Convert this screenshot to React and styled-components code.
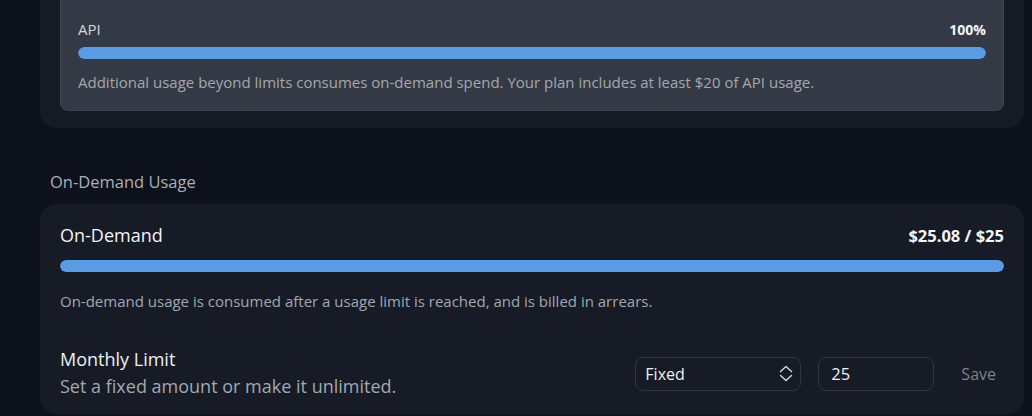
import React, { useState } from 'react';
import styled, { createGlobalStyle } from 'styled-components';

const GlobalStyle = createGlobalStyle`
  html, body {
    margin: 0;
    padding: 0;
    background: #0c111b;
    overflow: hidden;
  }
  body {
    font-family: "Open Sans", "Noto Sans", sans-serif;
    color: #e6e8eb;
  }
`;

const Page = styled.div`
  margin-top: -61px;
  padding: 0 8px 0 40px;
  display: flex;
  flex-direction: column;
`;

const OuterCard = styled.section`
  background: #151a23;
  border-radius: 16px;
  padding: 20px 20px 17px;
`;

const InnerCard = styled.div`
  background: #343a45;
  border: 1px solid #40464f;
  border-radius: 8px;
  padding: 58px 17px 18px;
`;

const MeterHead = styled.div`
  display: flex;
  justify-content: space-between;
  align-items: center;
  height: 22px;
`;

const MeterLabel = styled.span`
  font-size: ${p => (p.$big ? '18px' : '15px')};
  color: ${p => (p.$big ? '#f3f4f6' : '#d5d8dc')};
`;

const MeterValue = styled.span`
  font-size: ${p => (p.$big ? '16.5px' : '14px')};
  font-weight: 700;
  color: #f3f4f6;
`;

const Track = styled.div`
  margin-top: ${p => p.$gap || 7}px;
  height: 12px;
  border-radius: 6px;
  background: #2a303b;
  overflow: hidden;
`;

const Fill = styled.div`
  height: 100%;
  border-radius: 6px;
  background: #5a9be6;
`;

const Note = styled.p`
  margin: ${p => p.$top || 12}px 0 0;
  font-size: 15px;
  line-height: 20px;
  color: #a3a8b0;
`;

const SectionTitle = styled.h3`
  margin: 43px 0 0 10px;
  font-size: 16.5px;
  font-weight: 400;
  line-height: 22px;
  color: #a9afb8;
`;

const UsageCard = styled.section`
  margin-top: 11px;
  background: #161b26;
  border-radius: 16px;
  padding: 20px 20px 13px;
`;

const LimitRow = styled.div`
  margin-top: 36px;
  display: flex;
  align-items: center;
  justify-content: space-between;
`;

const LimitText = styled.div`
  display: flex;
  flex-direction: column;
`;

const LimitTitle = styled.span`
  font-size: 18px;
  line-height: 24px;
  color: #eef0f2;
`;

const LimitSub = styled.span`
  font-size: 18px;
  line-height: 30px;
  color: #a3a8b0;
`;

const Controls = styled.div`
  display: flex;
  align-items: center;
  gap: 17px;
  margin-top: -1px;
`;

const SelectBox = styled.div`
  width: 166px;
  height: 34px;
  box-sizing: border-box;
  border: 1px solid #2f3542;
  border-radius: 8px;
  display: flex;
  align-items: center;
  padding: 0 7px 0 9px;
  font-size: 16px;
  color: #eef0f2;
  justify-content: space-between;
`;

const AmountInput = styled.input`
  width: 116px;
  height: 34px;
  box-sizing: border-box;
  background: transparent;
  border: 1px solid #2f3542;
  border-radius: 8px;
  padding: 0 12px;
  font-family: inherit;
  font-size: 16.5px;
  color: #eef0f2;
  outline: none;
`;

const SaveButton = styled.button`
  background: none;
  border: 0;
  padding: 0 8px 0 10px;
  font-family: inherit;
  font-size: 16px;
  color: #7d828b;
  cursor: pointer;
`;

const Chevrons = () => (
  <svg width="14" height="20" viewBox="0 0 14 20" fill="none" stroke="#d2d6db" strokeWidth="1.5" strokeLinecap="round" strokeLinejoin="round">
    <path d="M1.5 7.5 7 2.5l5.5 5" />
    <path d="M1.5 11.5 7 16.5l5.5-5" />
  </svg>
);

export default function App() {
  const [limit, setLimit] = useState('25');

  return (
    <>
      <GlobalStyle />
      <Page>
        <OuterCard>
          <InnerCard>
            <MeterHead>
              <MeterLabel>API</MeterLabel>
              <MeterValue>100%</MeterValue>
            </MeterHead>
            <Track $gap={7}>
              <Fill style={{ width: '100%' }} />
            </Track>
            <Note $top={13}>
              Additional usage beyond limits consumes on-demand spend. Your plan includes at least $20 of API usage.
            </Note>
          </InnerCard>
        </OuterCard>

        <SectionTitle>On-Demand Usage</SectionTitle>
        <UsageCard>
          <MeterHead>
            <MeterLabel $big>On-Demand</MeterLabel>
            <MeterValue $big>$25.08 / $25</MeterValue>
          </MeterHead>
          <Track $gap={14}>
            <Fill style={{ width: '100%' }} />
          </Track>
          <Note $top={19}>
            On-demand usage is consumed after a usage limit is reached, and is billed in arrears.
          </Note>
          <LimitRow>
            <LimitText>
              <LimitTitle>Monthly Limit</LimitTitle>
              <LimitSub>Set a fixed amount or make it unlimited.</LimitSub>
            </LimitText>
            <Controls>
              <SelectBox>
                <span>Fixed</span>
                <Chevrons />
              </SelectBox>
              <AmountInput value={limit} onChange={e => setLimit(e.target.value)} />
              <SaveButton>Save</SaveButton>
            </Controls>
          </LimitRow>
        </UsageCard>
      </Page>
    </>
  );
}
